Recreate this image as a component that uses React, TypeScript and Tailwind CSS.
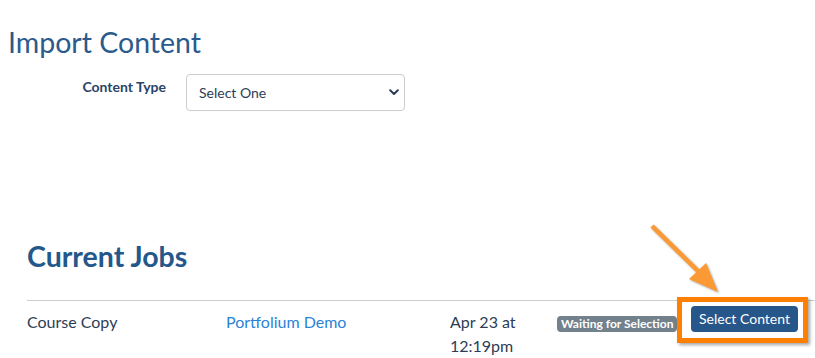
export default function App() {
  return (
    <div className="min-h-[358px] overflow-hidden bg-white font-['Lato','Noto_Sans',sans-serif] text-[#2d3d56]">
      <h1 className="ml-[8px] pt-[25px] text-[28.5px] leading-[1.2] font-normal text-[#2a5b8c]">Import Content</h1>

      <div className="mt-[15px] flex items-start">
        <label className="w-[186px] pr-[20px] pt-[5px] text-right text-[14px] leading-[1.2] font-bold text-[#2b4366]">
          Content Type
        </label>
        <div className="flex h-[37px] w-[219px] items-center justify-between rounded-[4px] border border-[#c7cdd1] bg-white pl-[12px] pr-[4px] text-[14px] text-[#2d3d56]">
          <span>Select One</span>
          <svg width="10" height="7" viewBox="0 0 10 7" className="mr-[1px]">
            <path d="M1.2 1.2 L5 5 L8.8 1.2" fill="none" stroke="#2d3d56" strokeWidth="2" strokeLinecap="round" strokeLinejoin="round" />
          </svg>
        </div>
      </div>

      <div className="ml-[27px] mt-[128px]">
        <h2 className="text-[28.5px] leading-[1.2] font-bold text-[#24578a]">Current Jobs</h2>
        <div className="mt-[27px] border-t border-[#c7cdd1]" />
        <div className="flex items-start text-[16px] leading-[24px]">
          <div className="w-[199px] pt-[9px]">Course Copy</div>
          <div className="w-[224px] pt-[9px] text-[#2b82d9]">Portfolium Demo</div>
          <div className="w-[107px] pr-[20px] pt-[9px]">Apr 23 at 12:19pm</div>
          <div className="flex w-[134px] pt-[15px]">
            <span className="block h-[16px] rounded-[4px] bg-[#73818c] px-[4px] text-[12px] leading-[16px] font-bold text-white">
              Waiting for Selection
            </span>
          </div>
          <div className="relative mt-[5px]">
            <button className="block h-[26px] w-[107px] rounded-[4px] bg-[#27568a] text-[14px] leading-[26px] text-white">
              Select Content
            </button>
            <div className="absolute -left-[14px] -top-[9px] h-[46px] w-[131px] border-[5px] border-[#ff8000] shadow-[2px_2px_3px_rgba(0,0,0,0.35)]" />
            <svg
              width="80"
              height="80"
              viewBox="0 0 80 80"
              className="absolute -left-[45px] -top-[86px] drop-shadow-[1px_1px_1px_rgba(0,0,0,0.35)]"
            >
              <line x1="6" y1="6" x2="52" y2="51" stroke="#fb9a34" strokeWidth="4.5" strokeLinecap="butt" />
              <polygon points="72,72 43,59 60,43" fill="#fb9a34" />
            </svg>
          </div>
        </div>
      </div>
    </div>
  );
}
